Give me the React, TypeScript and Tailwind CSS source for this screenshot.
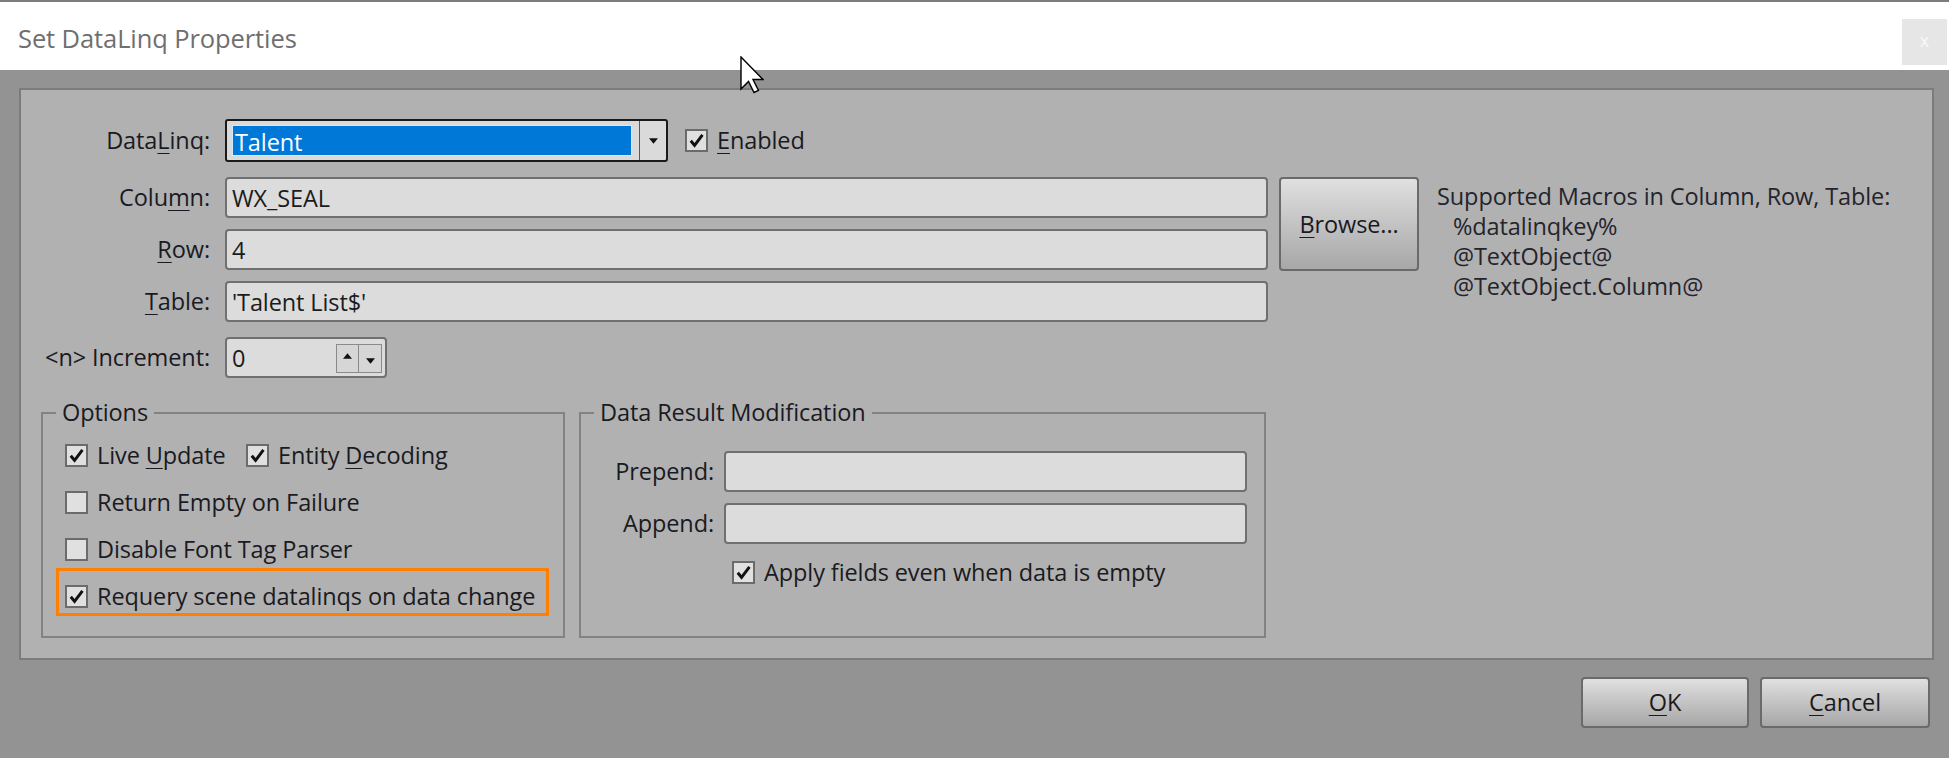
import React from 'react';

const Check = ({ checked, className = '' }: { checked?: boolean; className?: string }) => (
  <span
    className={`flex h-[23px] w-[23px] shrink-0 items-center justify-center border-2 border-[#6b6b6b] bg-[#e0e0e0] ${className}`}
  >
    {checked && (
      <svg viewBox="0 0 16 16" className="h-[17px] w-[17px]">
        <path d="M2.6 8.2 L6.2 12.6 L13.6 2.8" fill="none" stroke="#111" strokeWidth="2.8" strokeLinejoin="miter" />
      </svg>
    )}
  </span>
);

const Btn = ({ children, className = '' }: { children: React.ReactNode; className?: string }) => (
  <div
    className={`flex items-center justify-center rounded-[4px] border-2 border-[#6a6a6a] bg-linear-to-b from-[#e0e0e0] to-[#a7a7a7] ${className}`}
  >
    {children}
  </div>
);

const Field = ({ value = '', className = '' }: { value?: string; className?: string }) => (
  <div
    className={`flex h-[41px] items-center rounded-[4px] border-2 border-[#707070] bg-[#dcdcdc] pl-[5px] pt-[2px] text-[#1b1b1b] ${className}`}
  >
    {value}
  </div>
);

const Label = ({ children, className = 'w-[171px]' }: { children: React.ReactNode; className?: string }) => (
  <div className={`shrink-0 text-right ${className}`}>{children}</div>
);

const U = ({ children }: { children: React.ReactNode }) => (
  <span className="underline decoration-1 underline-offset-[4px]">{children}</span>
);

function Combo() {
  return (
    <div className="ml-[15px] flex h-[43px] w-[443px] items-stretch rounded-[3px] border-2 border-[#1a1a1a] bg-[#dadada]">
      <div className="my-[4px] ml-[5px] flex w-[400px] items-center border border-[#d6e8f8] bg-[#0078d7] pl-[2px] pt-[3px] text-white">
        Talent
      </div>
      <div className="ml-auto flex w-[27px] items-center justify-center border-l border-[#5a5a5a]">
        <svg viewBox="0 0 10 6" className="h-[6px] w-[9px]">
          <path d="M0 0 H10 L5 6 Z" fill="#111" />
        </svg>
      </div>
    </div>
  );
}

function Spinner() {
  return (
    <div className="ml-auto mr-[3px] flex h-[29px]">
      <div className="flex w-[23px] items-start justify-center border border-[#8a8a8a] bg-[#d6d6d6] pt-[8px]">
        <svg viewBox="0 0 10 6" className="h-[6px] w-[9px]">
          <path d="M0 6 H10 L5 0 Z" fill="#111" />
        </svg>
      </div>
      <div className="flex w-[23px] items-end justify-center border border-l-0 border-[#8a8a8a] bg-[#d6d6d6] pb-[8px]">
        <svg viewBox="0 0 10 6" className="h-[6px] w-[9px]">
          <path d="M0 0 H10 L5 6 Z" fill="#111" />
        </svg>
      </div>
    </div>
  );
}

function Cursor() {
  return (
    <svg viewBox="0 0 24 38" className="absolute left-[740px] top-[56px] h-[38px] w-[24px]">
      <path
        d="M1 1 L1 33 L8.5 25.5 L14 36.5 L18.5 34.5 L13 23.5 L23 23.5 Z"
        fill="#fff"
        stroke="#000"
        strokeWidth="1.4"
        strokeLinejoin="miter"
      />
    </svg>
  );
}

export default function App() {
  return (
    <div className="relative flex h-[758px] w-[1949px] flex-col overflow-hidden bg-[#939393] font-['Open_Sans','Noto_Sans',sans-serif] text-[23.5px] leading-[29px] tracking-[-0.1px] text-[#1a1a22]">
      {/* title bar */}
      <div className="relative h-[70px] shrink-0 border-t-2 border-[#7d7d7d] bg-white">
        <div className="pl-[18px] pt-[18px] text-[25.5px] leading-[36px] text-[#6f6f6f]">Set DataLinq Properties</div>
        <div className="absolute right-[2px] top-[17px] flex h-[46px] w-[45px] items-center justify-center bg-[#e6e6e6] pb-[4px] text-[18px] text-[#f8f8f8]">
          x
        </div>
      </div>

      {/* main panel */}
      <div className="ml-[19px] mr-[15px] mt-[18px] h-[572px] shrink-0 border-2 border-[#7c7c7c] bg-[#b1b1b1] pl-[18px] pt-[29px]">
        <div className="flex items-center">
          <Label>
            Data<U>L</U>inq:
          </Label>
          <Combo />
          <Check checked className="ml-[17px]" />
          <span className="ml-[9px]">
            <U>E</U>nabled
          </span>
        </div>

        <div className="mt-[15px] flex items-start">
          <div className="flex w-[1229px] flex-col gap-[11px]">
            <div className="flex items-center">
              <Label>
                Colu<U>m</U>n:
              </Label>
              <Field value="WX_SEAL" className="ml-[15px] flex-1" />
            </div>
            <div className="flex items-center">
              <Label>
                <U>R</U>ow:
              </Label>
              <Field value="4" className="ml-[15px] flex-1" />
            </div>
            <div className="flex items-center">
              <Label>
                <U>T</U>able:
              </Label>
              <Field value="'Talent List$'" className="ml-[15px] flex-1" />
            </div>
          </div>
          <Btn className="ml-[11px] h-[94px] w-[140px]">
            <span>
              <U>B</U>rowse...
            </span>
          </Btn>
          <div className="ml-[18px] pt-[4px] leading-[30px] text-[#24242d]">
            <div>Supported Macros in Column, Row, Table:</div>
            <div className="pl-[16px]">%datalinqkey%</div>
            <div className="pl-[16px]">@TextObject@</div>
            <div className="pl-[16px]">@TextObject.Column@</div>
          </div>
        </div>

        <div className="mt-[15px] flex items-center">
          <Label>&lt;n&gt; Increment:</Label>
          <div className="ml-[15px] flex h-[41px] w-[162px] items-center rounded-[4px] border-2 border-[#707070] bg-[#dcdcdc] pl-[5px] pt-[2px] text-[#1b1b1b]">
            0
            <Spinner />
          </div>
        </div>

        {/* group boxes */}
        <div className="ml-[2px] mt-[20px] flex items-stretch gap-[14px]">
          <fieldset className="w-[524px] border-2 border-[#828282]">
            <legend className="ml-[13px] px-[6px] leading-[29px]">Options</legend>
            <div className="pb-[20px] pl-[22px] pt-[5px]">
              <div className="flex h-[47px] items-center">
                <Check checked />
                <span className="ml-[9px] w-[149px]">
                  Live <U>U</U>pdate
                </span>
                <Check checked />
                <span className="ml-[9px]">
                  Entity <U>D</U>ecoding
                </span>
              </div>
              <div className="flex h-[47px] items-center">
                <Check />
                <span className="ml-[9px]">Return Empty on Failure</span>
              </div>
              <div className="flex h-[47px] items-center">
                <Check />
                <span className="ml-[9px]">Disable Font Tag Parser</span>
              </div>
              <div className="-ml-[9px] -mt-[5px] flex h-[48px] w-[493px] items-center border-[3px] border-[#ff7f00] pl-[6px] pt-[8px]">
                <Check checked />
                <span className="ml-[9px]">Requery scene datalinqs on data change</span>
              </div>
            </div>
          </fieldset>

          <fieldset className="w-[687px] border-2 border-[#828282]">
            <legend className="ml-[13px] px-[6px] leading-[29px]">Data Result Modification</legend>
            <div className="pr-[17px] pt-[24px]">
              <div className="flex items-center">
                <Label className="w-[133px]">Prepend:</Label>
                <Field className="ml-[10px] flex-1" />
              </div>
              <div className="mt-[11px] flex items-center">
                <Label className="w-[133px]">Append:</Label>
                <Field className="ml-[10px] flex-1" />
              </div>
              <div className="mt-[13px] flex h-[30px] items-center pl-[151px]">
                <Check checked />
                <span className="ml-[9px]">Apply fields even when data is empty</span>
              </div>
            </div>
          </fieldset>
        </div>
      </div>

      {/* dialog buttons */}
      <div className="mr-[19px] mt-[17px] flex justify-end gap-[11px]">
        <Btn className="h-[51px] w-[168px]">
          <span>
            <U>O</U>K
          </span>
        </Btn>
        <Btn className="h-[51px] w-[170px]">
          <span>
            <U>C</U>ancel
          </span>
        </Btn>
      </div>

      <Cursor />
    </div>
  );
}
